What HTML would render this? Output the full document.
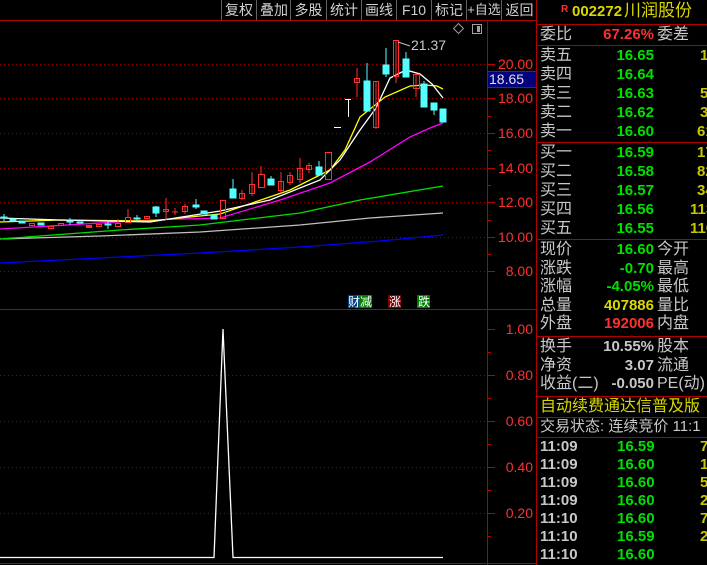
<!DOCTYPE html>
<html><head><meta charset="utf-8"><style>
body{margin:0;background:#000;width:707px;height:565px;overflow:hidden;position:relative;font-family:"Liberation Sans","Noto Sans CJK SC",sans-serif}
.t{position:absolute;white-space:nowrap;line-height:18px}
.l{left:540px;color:#c8c8c8;font-size:16px}
.n{right:53px;font-size:15px;font-weight:bold;text-align:right}
.c{left:657px;color:#c8c8c8;font-size:16px}
.v{left:700px;font-size:15px;font-weight:bold;color:#c8c800}
.g{color:#00e000}.r{color:#ff3030}.y{color:#d8d800}.w{color:#c8c8c8}
.hl{position:absolute;left:537px;width:170px;height:1px;background:#b00000}
.tb{position:absolute;top:0;height:20px;line-height:20px;color:#d0d0d0;font-size:14px;text-align:center;border-left:1px solid #606060;white-space:nowrap;overflow:hidden}
</style></head><body>
<svg width="537" height="565" style="position:absolute;left:0;top:0">
<line x1="0" y1="20.5" x2="537" y2="20.5" stroke="#b00000"/>
<line x1="487.5" y1="20" x2="487.5" y2="565" stroke="#b00000"/>
<line x1="0" y1="309.5" x2="537" y2="309.5" stroke="#b00000"/>
<line x1="536.5" y1="0" x2="536.5" y2="565" stroke="#b00000"/>
<line x1="0" y1="563.5" x2="537" y2="563.5" stroke="#b00000"/>
<g stroke="#900000" stroke-dasharray="1 3">
<line x1="0" y1="64.5" x2="487" y2="64.5"/><line x1="0" y1="98.5" x2="487" y2="98.5"/><line x1="0" y1="133.5" x2="487" y2="133.5"/><line x1="0" y1="168.5" x2="487" y2="168.5"/><line x1="0" y1="202.5" x2="487" y2="202.5"/><line x1="0" y1="237.5" x2="487" y2="237.5"/><line x1="0" y1="271.5" x2="487" y2="271.5"/>
<line x1="0" y1="375.5" x2="487" y2="375.5"/><line x1="0" y1="421.5" x2="487" y2="421.5"/><line x1="0" y1="467.5" x2="487" y2="467.5"/><line x1="0" y1="513.5" x2="487" y2="513.5"/>
</g>
<g stroke="#c00000">
<line x1="487" y1="64.5" x2="495" y2="64.5"/><line x1="487" y1="81.5" x2="491" y2="81.5"/><line x1="487" y1="98.5" x2="495" y2="98.5"/><line x1="487" y1="116.5" x2="491" y2="116.5"/><line x1="487" y1="133.5" x2="495" y2="133.5"/><line x1="487" y1="150.5" x2="491" y2="150.5"/><line x1="487" y1="168.5" x2="495" y2="168.5"/><line x1="487" y1="185.5" x2="491" y2="185.5"/><line x1="487" y1="202.5" x2="495" y2="202.5"/><line x1="487" y1="220.5" x2="491" y2="220.5"/><line x1="487" y1="237.5" x2="495" y2="237.5"/><line x1="487" y1="254.5" x2="491" y2="254.5"/><line x1="487" y1="271.5" x2="495" y2="271.5"/>
<line x1="487" y1="329.5" x2="495" y2="329.5"/><line x1="487" y1="352.5" x2="491" y2="352.5"/><line x1="487" y1="375.5" x2="495" y2="375.5"/><line x1="487" y1="398.5" x2="491" y2="398.5"/><line x1="487" y1="421.5" x2="495" y2="421.5"/><line x1="487" y1="444.5" x2="491" y2="444.5"/><line x1="487" y1="467.5" x2="495" y2="467.5"/><line x1="487" y1="490.5" x2="491" y2="490.5"/><line x1="487" y1="513.5" x2="495" y2="513.5"/><line x1="487" y1="536.5" x2="491" y2="536.5"/>
</g>
<g fill="#ff3030" font-size="14" font-family="Liberation Sans" text-anchor="end">
<text x="533" y="69">20.00</text><text x="533" y="103">18.00</text><text x="533" y="138">16.00</text><text x="533" y="173">14.00</text><text x="533" y="207">12.00</text><text x="533" y="242">10.00</text><text x="533" y="276">8.00</text>
<text x="533" y="334">1.00</text><text x="533" y="380">0.80</text><text x="533" y="426">0.60</text><text x="533" y="472">0.40</text><text x="533" y="518">0.20</text>
</g>
<rect x="487.5" y="71.5" width="49" height="16" fill="#000080" stroke="#b00000"/>
<text x="489" y="84" fill="#e0e0e0" font-size="14" font-family="Liberation Sans">18.65</text>
<g fill="none" stroke-width="1.3">
<polyline stroke="#0000ff" points="0,263 100,258 200,253 300,247 380,241 443,235"/>
<polyline stroke="#c0c0c0" points="0,239 100,236 200,232 300,225 370,218 443,213"/>
<polyline stroke="#00e000" points="0,239 120,230 200,225 300,213 360,200 443,186"/>
<polyline stroke="#ff00ff" points="0,229 150,220 220,218 280,200 330,183 370,162 410,137 430,128 443,123"/>
<polyline stroke="#ffff00" points="0,222 60,220 150,221 220,214 290,190 330,170 345,150 360,117 385,97 410,86 425,85 437,86 443,89"/>
<polyline stroke="#ffffff" points="0,218 60,220 150,222 220,211 270,200 320,180 340,160 360,130 376,108 390,78 406,70 420,74 432,84 443,98"/>
</g>
<g stroke-width="1">
<g fill="#55ffff" stroke="#55ffff">
<line x1="4" y1="214" x2="4" y2="221"/><rect x="1" y="217" width="6" height="1"/>
<rect x="10" y="219" width="6" height="2"/><rect x="19" y="221" width="6" height="2"/><rect x="38" y="223" width="6" height="2"/>
<line x1="70" y1="218" x2="70" y2="225"/><rect x="67" y="221" width="6" height="1"/><rect x="77" y="222" width="6" height="1"/>
<line x1="108" y1="220" x2="108" y2="229"/><rect x="105" y="224" width="6" height="1"/>
<line x1="137" y1="215" x2="137" y2="222"/><rect x="134" y="218" width="6" height="1"/>
<line x1="156" y1="206" x2="156" y2="217"/><rect x="153" y="207" width="6" height="6"/>
<line x1="196" y1="199" x2="196" y2="209"/><rect x="193" y="205" width="6" height="2"/>
<rect x="201" y="211" width="6" height="3"/><rect x="211" y="215" width="6" height="4"/>
<line x1="233" y1="179" x2="233" y2="198"/><rect x="230" y="189" width="6" height="9"/>
<line x1="271" y1="176" x2="271" y2="185"/><rect x="268" y="179" width="6" height="6"/>
<line x1="319" y1="161" x2="319" y2="175"/><rect x="316" y="167" width="6" height="8"/>
<line x1="367" y1="63" x2="367" y2="111"/><rect x="364" y="81" width="6" height="30"/>
<line x1="386" y1="48" x2="386" y2="77"/><rect x="383" y="65" width="6" height="9"/>
<line x1="406" y1="52" x2="406" y2="77"/><rect x="403" y="59" width="6" height="18"/>
<line x1="424" y1="81" x2="424" y2="107"/><rect x="421" y="84" width="6" height="23"/>
<line x1="434" y1="103" x2="434" y2="115"/><rect x="431" y="103" width="6" height="7"/>
<rect x="440" y="109" width="6" height="13"/>
</g>
<g fill="none" stroke="#ff3030">
<rect x="29.5" y="223.5" width="5" height="2"/><rect x="48.5" y="226.5" width="5" height="2"/><rect x="58.5" y="223.5" width="5" height="2"/>
<rect x="86.5" y="225.5" width="5" height="2" fill="#ff3030"/><rect x="96.5" y="224.5" width="5" height="2"/>
<line x1="118" y1="219" x2="118" y2="224"/><rect x="115.5" y="223.5" width="5" height="3"/>
<line x1="128" y1="209" x2="128" y2="217"/><rect x="125.5" y="217.5" width="5" height="5"/>
<rect x="144.5" y="216.5" width="5" height="2"/>
<line x1="166" y1="198" x2="166" y2="220"/><rect x="163.5" y="209.5" width="5" height="2"/>
<line x1="175" y1="208" x2="175" y2="215"/><line x1="172" y1="212" x2="178" y2="212"/>
<line x1="185" y1="204" x2="185" y2="214"/><rect x="182.5" y="206.5" width="5" height="5"/>
<rect x="220.5" y="200.5" width="5" height="18"/>
<line x1="242" y1="190" x2="242" y2="200"/><rect x="239.5" y="193.5" width="5" height="5"/>
<line x1="252" y1="172" x2="252" y2="196"/><rect x="249.5" y="184.5" width="5" height="9"/>
<line x1="261" y1="166" x2="261" y2="174"/><rect x="258.5" y="174.5" width="6" height="13"/>
<line x1="281" y1="172" x2="281" y2="193"/><rect x="278.5" y="181.5" width="5" height="9"/>
<line x1="290" y1="172" x2="290" y2="185"/><rect x="287.5" y="175.5" width="5" height="7"/>
<line x1="300" y1="158" x2="300" y2="183"/><rect x="297.5" y="168.5" width="5" height="11"/>
<line x1="309" y1="163" x2="309" y2="173"/><rect x="306.5" y="165.5" width="5" height="4"/>
<rect x="325.5" y="152.5" width="6" height="27"/>
<line x1="357" y1="68" x2="357" y2="97"/><rect x="354.5" y="78.5" width="5" height="4"/>
<line x1="376" y1="81" x2="376" y2="129"/><rect x="373.5" y="81.5" width="5" height="46"/>
<line x1="396" y1="40" x2="396" y2="83"/><rect x="393.5" y="40.5" width="5" height="36"/>
<line x1="416" y1="74" x2="416" y2="97"/><rect x="413.5" y="74.5" width="6" height="14"/>
</g>
<g stroke="#ffffff">
<line x1="334" y1="127.5" x2="341" y2="127.5"/>
<line x1="345" y1="99.5" x2="351" y2="99.5"/><line x1="348.5" y1="99" x2="348.5" y2="117"/>
</g>
</g>
<line x1="398" y1="42" x2="410" y2="46" stroke="#c0c0c0"/>
<text x="411" y="50" fill="#c8c8c8" font-size="14" font-family="Liberation Sans">21.37</text>
<rect x="455" y="25" width="7" height="7" transform="rotate(45 458.5 28.5)" fill="none" stroke="#a0a0a0"/>
<rect x="472.5" y="24.5" width="9" height="9" fill="none" stroke="#a0a0a0"/><rect x="477" y="26" width="3" height="6" fill="#a0a0a0"/>
<rect x="348" y="295" width="11" height="13" fill="#004080"/><rect x="359" y="295" width="13" height="13" fill="#008000"/>
<text x="348" y="306" fill="#fff" font-size="12" font-family="Noto Sans CJK SC">财</text><text x="360" y="306" fill="#fff" font-size="12" font-family="Noto Sans CJK SC">减</text>
<rect x="388" y="295" width="13" height="13" fill="#800000"/><text x="389" y="306" fill="#fff" font-size="12" font-family="Noto Sans CJK SC">涨</text>
<rect x="417" y="295" width="13" height="13" fill="#008000"/><text x="418" y="306" fill="#fff" font-size="12" font-family="Noto Sans CJK SC">跌</text>
<polyline fill="none" stroke="#ffffff" stroke-width="1.3" points="0,557.5 214,557.5 223,329 233,557.5 443,557.5"/>
</svg>
<div class="tb" style="left:221px;width:34px">复权</div><div class="tb" style="left:256px;width:34px">叠加</div><div class="tb" style="left:290px;width:35px">多股</div><div class="tb" style="left:326px;width:34px">统计</div><div class="tb" style="left:361px;width:34px">画线</div><div class="tb" style="left:396px;width:34px">F10</div><div class="tb" style="left:431px;width:34px">标记</div><div class="tb" style="left:466px;width:34px;font-size:13px">+自选</div><div class="tb" style="left:501px;width:35px">返回</div>

<div class="t r" style="left:561px;top:1px;font-size:10px;font-weight:bold">R</div>
<div class="t y" style="left:572px;top:3px;font-size:15px;font-weight:bold">002272</div>
<div class="t y" style="left:624px;top:2px;font-size:17px">川润股份</div>
<div class="hl" style="top:24px"></div>
<div class="t l" style="top:26px">委比</div><div class="t n r" style="top:26px">67.26%</div><div class="t c" style="top:26px">委差</div>
<div class="hl" style="top:45px"></div>
<div class="t l" style="top:47px">卖五</div><div class="t n g" style="top:47px">16.65</div><div class="t v" style="top:47px">1</div>
<div class="t l" style="top:66px">卖四</div><div class="t n g" style="top:66px">16.64</div>
<div class="t l" style="top:85px">卖三</div><div class="t n g" style="top:85px">16.63</div><div class="t v" style="top:85px">5</div>
<div class="t l" style="top:104px">卖二</div><div class="t n g" style="top:104px">16.62</div><div class="t v" style="top:104px">3</div>
<div class="t l" style="top:123px">卖一</div><div class="t n g" style="top:123px">16.60</div><div class="t v" style="top:123px;left:697px">61</div>
<div class="hl" style="top:142px"></div>
<div class="t l" style="top:144px">买一</div><div class="t n g" style="top:144px">16.59</div><div class="t v" style="top:144px;left:697px">17</div>
<div class="t l" style="top:163px">买二</div><div class="t n g" style="top:163px">16.58</div><div class="t v" style="top:163px;left:697px">82</div>
<div class="t l" style="top:182px">买三</div><div class="t n g" style="top:182px">16.57</div><div class="t v" style="top:182px;left:697px">34</div>
<div class="t l" style="top:201px">买四</div><div class="t n g" style="top:201px">16.56</div><div class="t v" style="top:201px;left:690px">113</div>
<div class="t l" style="top:220px">买五</div><div class="t n g" style="top:220px">16.55</div><div class="t v" style="top:220px;left:690px">110</div>
<div class="hl" style="top:239px"></div>
<div class="t l" style="top:241px">现价</div><div class="t n g" style="top:241px">16.60</div><div class="t c" style="top:241px">今开</div>
<div class="t l" style="top:260px">涨跌</div><div class="t n g" style="top:260px">-0.70</div><div class="t c" style="top:260px">最高</div>
<div class="t l" style="top:278px">涨幅</div><div class="t n g" style="top:278px">-4.05%</div><div class="t c" style="top:278px">最低</div>
<div class="t l" style="top:297px">总量</div><div class="t n y" style="top:297px">407886</div><div class="t c" style="top:297px">量比</div>
<div class="t l" style="top:315px">外盘</div><div class="t n r" style="top:315px">192006</div><div class="t c" style="top:315px">内盘</div>
<div class="hl" style="top:336px"></div>
<div class="t l" style="top:338px">换手</div><div class="t n w" style="top:338px">10.55%</div><div class="t c" style="top:338px">股本</div>
<div class="t l" style="top:357px">净资</div><div class="t n w" style="top:357px">3.07</div><div class="t c" style="top:357px">流通</div>
<div class="t l" style="top:375px">收益(二)</div><div class="t n w" style="top:375px">-0.050</div><div class="t c" style="top:375px">PE(动)</div>
<div class="hl" style="top:396px"></div>
<div class="t y" style="left:540px;top:398px;font-size:16px">自动续费通达信普及版</div>
<div class="hl" style="top:417px"></div>
<div class="t w" style="left:540px;top:418px;font-size:15px">交易状态: 连续竞价 11:1</div>
<div class="hl" style="top:437px"></div>
<div class="t w" style="left:540px;top:438px;font-size:15px;font-weight:bold">11:09</div><div class="t g" style="left:617px;top:438px;font-size:15px;font-weight:bold">16.59</div><div class="t v" style="top:438px">7</div>
<div class="t w" style="left:540px;top:456px;font-size:15px;font-weight:bold">11:09</div><div class="t g" style="left:617px;top:456px;font-size:15px;font-weight:bold">16.60</div><div class="t v" style="top:456px">1</div>
<div class="t w" style="left:540px;top:474px;font-size:15px;font-weight:bold">11:09</div><div class="t g" style="left:617px;top:474px;font-size:15px;font-weight:bold">16.60</div><div class="t v" style="top:474px">5</div>
<div class="t w" style="left:540px;top:492px;font-size:15px;font-weight:bold">11:09</div><div class="t g" style="left:617px;top:492px;font-size:15px;font-weight:bold">16.60</div><div class="t v" style="top:492px">2</div>
<div class="t w" style="left:540px;top:510px;font-size:15px;font-weight:bold">11:10</div><div class="t g" style="left:617px;top:510px;font-size:15px;font-weight:bold">16.60</div><div class="t v" style="top:510px">7</div>
<div class="t w" style="left:540px;top:528px;font-size:15px;font-weight:bold">11:10</div><div class="t g" style="left:617px;top:528px;font-size:15px;font-weight:bold">16.59</div><div class="t v" style="top:528px">2</div>
<div class="t w" style="left:540px;top:546px;font-size:15px;font-weight:bold">11:10</div><div class="t g" style="left:617px;top:546px;font-size:15px;font-weight:bold">16.60</div>
</body></html>
